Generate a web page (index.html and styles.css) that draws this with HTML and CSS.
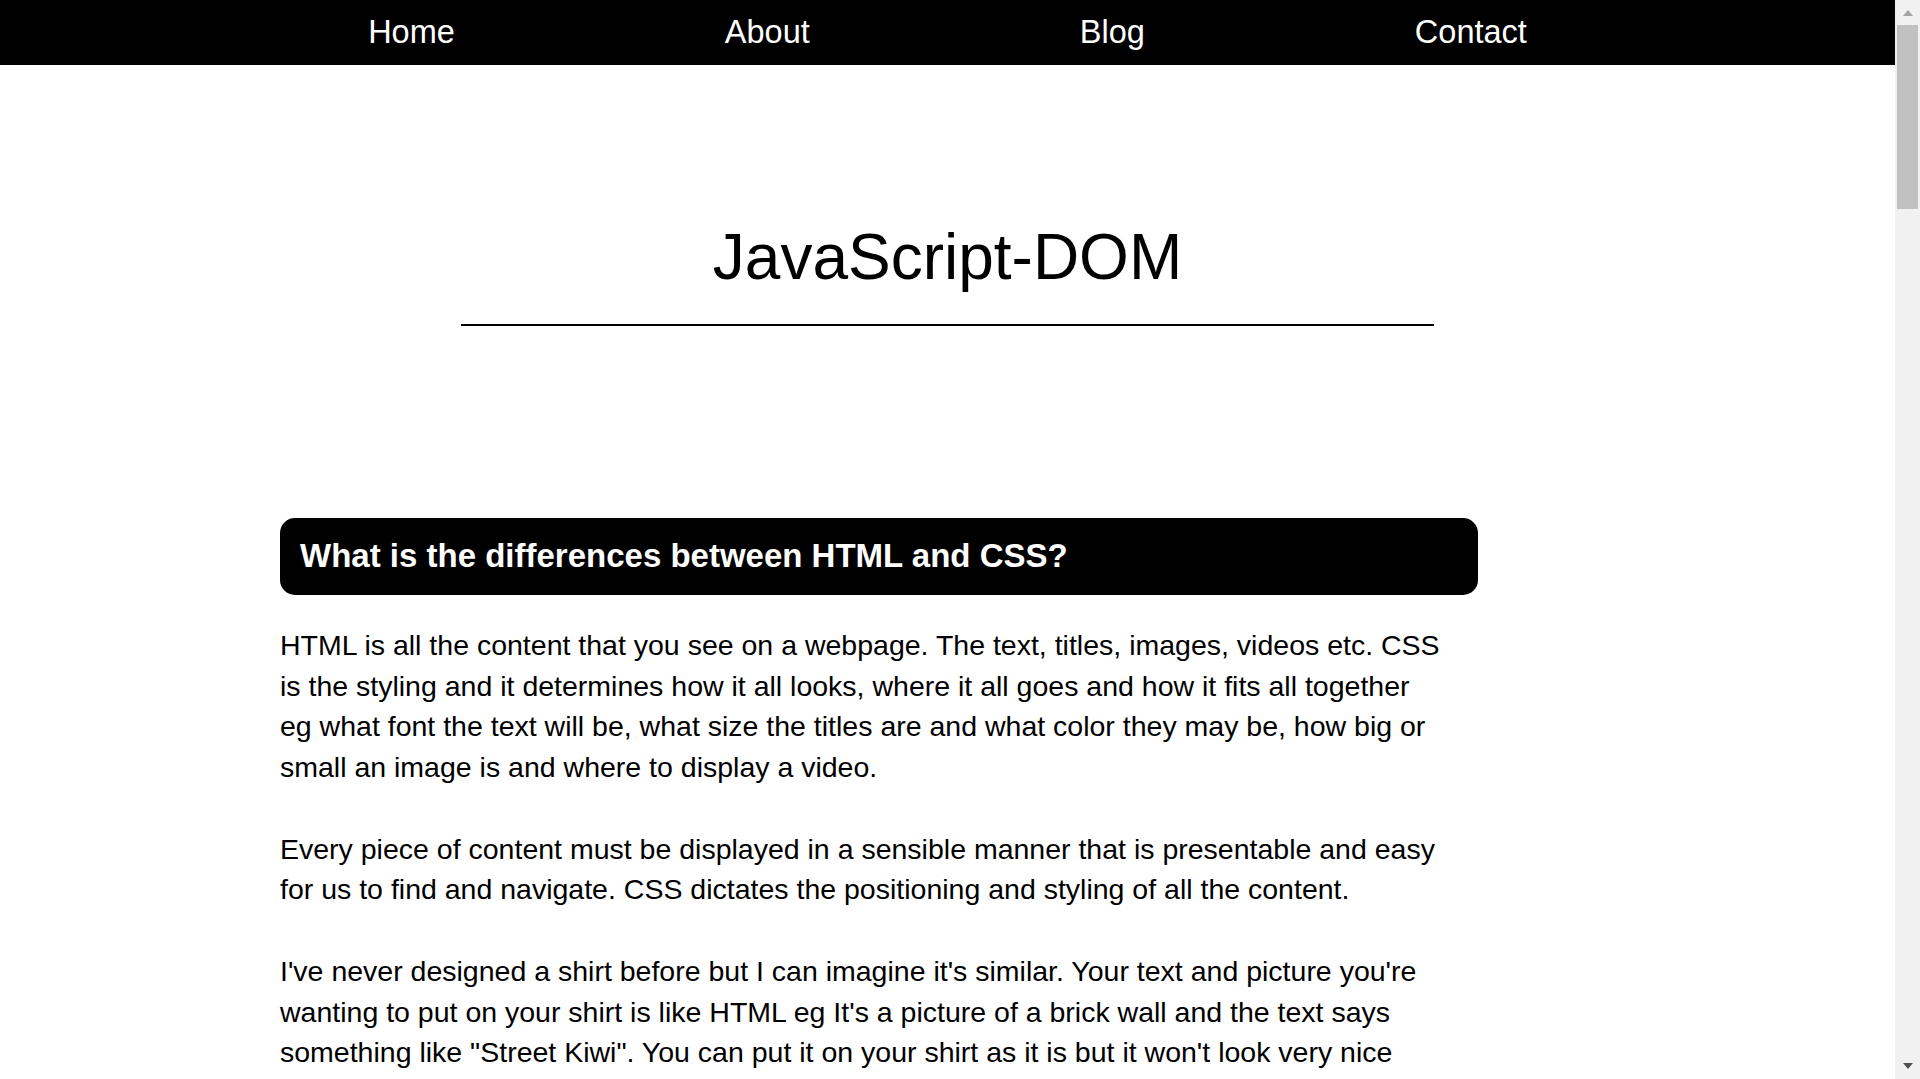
FILE: index.html
```html
<!DOCTYPE html>
<html lang="en">
<head>
<meta charset="utf-8">
<title>JavaScript-DOM</title>
<link rel="stylesheet" href="styles.css">
</head>
<body class="page">
  <nav class="topnav">
    <ul class="nav-list">
      <li class="nav-item"><a class="nav-link" href="#">Home</a></li>
      <li class="nav-item"><a class="nav-link" href="#">About</a></li>
      <li class="nav-item"><a class="nav-link" href="#">Blog</a></li>
      <li class="nav-item"><a class="nav-link" href="#">Contact</a></li>
    </ul>
  </nav>

  <header class="page-header">
    <h1 class="page-title">JavaScript-DOM</h1>
  </header>

  <main class="content">
    <section class="entry">
      <h2 class="entry-title">What is the differences between HTML and CSS?</h2>
      <p class="entry-text">HTML is all the content that you see on a webpage. The text, titles, images, videos etc. CSS is the styling and it determines how it all looks, where it all goes and how it fits all together eg what font the text will be, what size the titles are and what color they may be, how big or small an image is and where to display a video.</p>
      <p class="entry-text">Every piece of content must be displayed in a sensible manner that is presentable and easy for us to find and navigate. CSS dictates the positioning and styling of all the content.</p>
      <p class="entry-text">I've never designed a shirt before but I can imagine it's similar. Your text and picture you're wanting to put on your shirt is like HTML eg It's a picture of a brick wall and the text says something like "Street Kiwi". You can put it on your shirt as it is but it won't look very nice</p>
    </section>
  </main>

  <div class="scrollbar" aria-hidden="true">
    <div class="scrollbar-btn"><span class="arrow arrow-up"></span></div>
    <div class="scrollbar-thumb"></div>
    <div class="scrollbar-track"></div>
    <div class="scrollbar-btn scrollbar-btn-end"><span class="arrow arrow-down"></span></div>
  </div>
</body>
</html>
```
FILE: styles.css
```css
html {
  background: #ffffff;
}

.page {
  margin: 0;
  padding-right: 25px;
  font-family: "Liberation Sans", Arial, sans-serif;
  color: #000000;
  background: #ffffff;
}

/* Navigation bar */
.topnav {
  background: #000000;
  height: 65px;
}

.nav-list {
  list-style: none;
  margin: 0;
  padding: 0;
  height: 65px;
  display: flex;
  justify-content: center;
  align-items: flex-start;
  gap: 270px;
}

.nav-item {
  padding-top: 2.5px;
  line-height: 59px;
}

.nav-link {
  color: #ffffff;
  text-decoration: none;
  font-size: 32.5px;
}

/* Title */
.page-header {
  padding-top: 155px;
}

.page-title {
  width: 973px;
  margin: 0 auto;
  padding-bottom: 30px;
  border-bottom: 2px solid #000000;
  font-size: 64px;
  font-weight: normal;
  line-height: 74px;
  text-align: center;
}

/* Content */
.content {
  margin-top: 192px;
  margin-left: 280px;
  width: 1198px;
  padding-bottom: 200px;
}

.entry-title {
  margin: 0;
  padding: 18px 20px 20px;
  background: #000000;
  color: #ffffff;
  border-radius: 15px;
  font-size: 33px;
  font-weight: bold;
  line-height: 39px;
}

.entry-text {
  width: 1165px;
  margin: 30px 0 0;
  font-size: 28.5px;
  line-height: 40.5px;
}

.entry-text + .entry-text {
  margin-top: 41.5px;
}

/* Window scrollbar (drawn, sits over the right edge) */
.scrollbar {
  position: fixed;
  top: 0;
  right: 0;
  width: 25px;
  height: 100vh;
  background: #f1f1f1;
  display: flex;
  flex-direction: column;
}

.scrollbar-btn {
  height: 25px;
  flex: none;
  display: flex;
  justify-content: center;
  align-items: flex-start;
  padding-top: 10px;
  box-sizing: border-box;
}

.scrollbar-btn-end {
  padding-top: 9px;
}

.scrollbar-thumb {
  flex: none;
  height: 184px;
  margin: 0 2px;
  background: #c1c1c1;
}

.scrollbar-track {
  flex: 1;
}

.arrow {
  width: 0;
  height: 0;
  border-left: 5.5px solid transparent;
  border-right: 5.5px solid transparent;
}

.arrow-up {
  border-bottom: 6px solid #a3a3a3;
}

.arrow-down {
  border-top: 6px solid #505050;
}
```
